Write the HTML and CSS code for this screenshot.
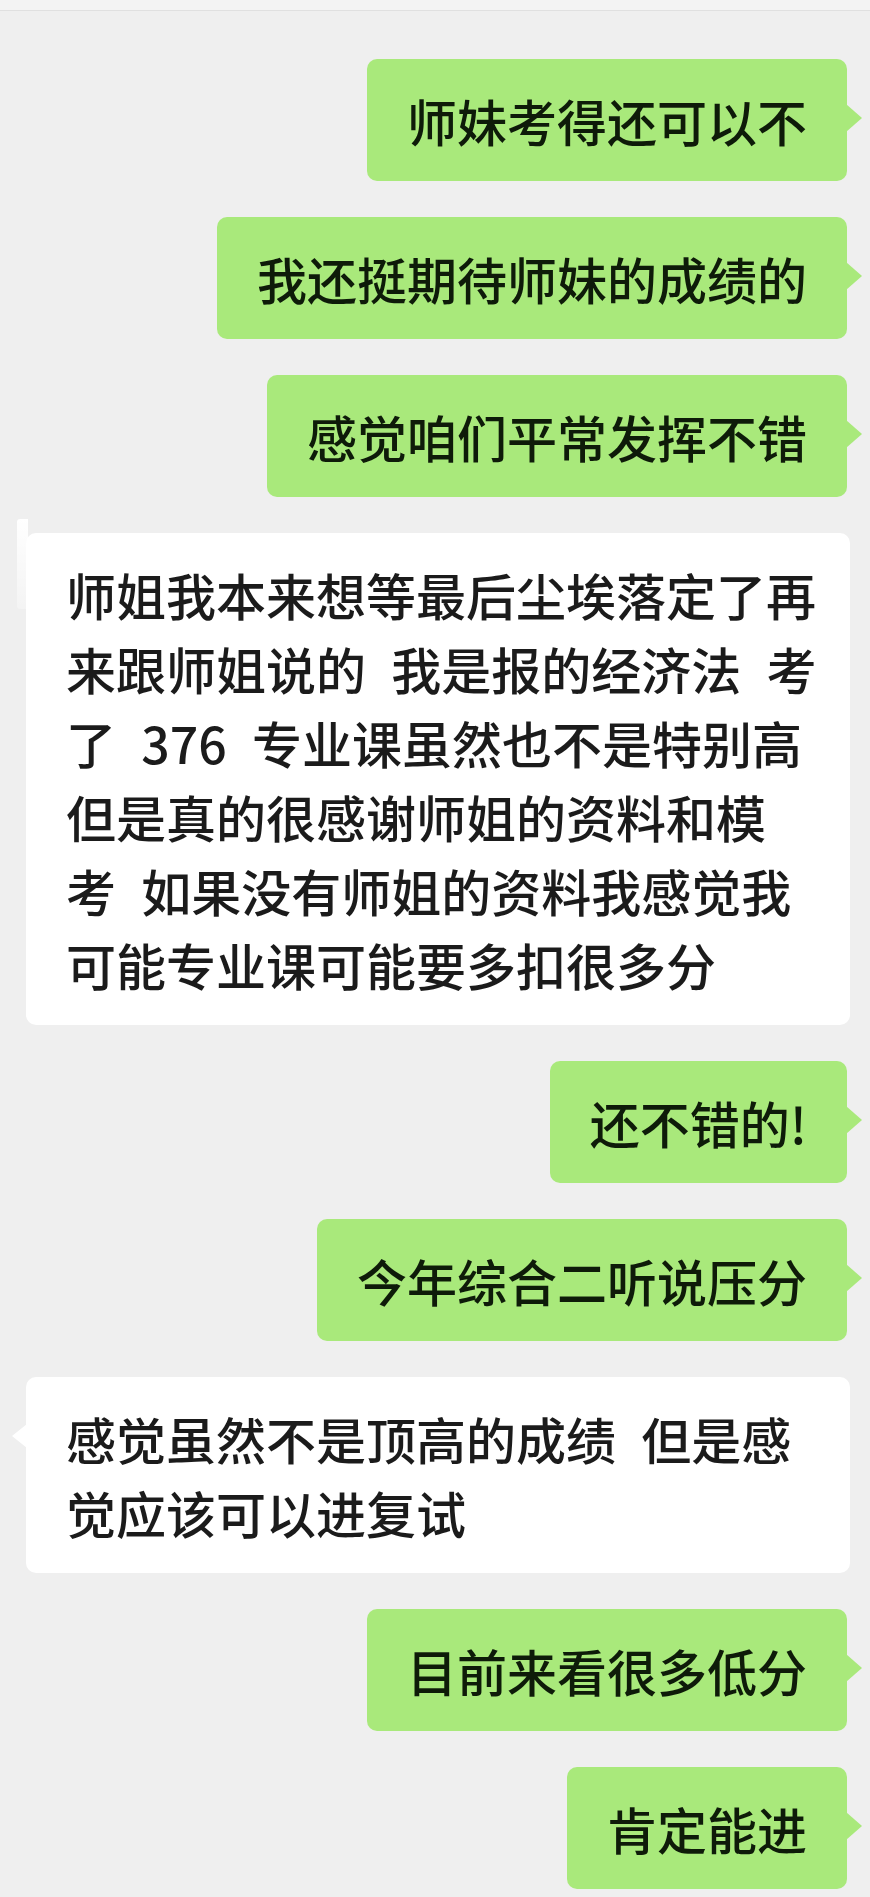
FILE: index.html
```html
<!DOCTYPE html>
<html lang="zh-CN">

<head>
    <meta charset="UTF-8">
    <meta name="viewport" content="width=device-width, initial-scale=1.0">
    <title>聊天记录</title>
    <link rel="stylesheet" href="styles.css">
</head>

<body>
    <div class="chat">
        <div class="top-strip"></div>
        <div class="messages">
            <div class="msg msg-self">
                <div class="bubble">师妹考得还可以不</div>
            </div>
            <div class="msg msg-self">
                <div class="bubble">我还挺期待师妹的成绩的</div>
            </div>
            <div class="msg msg-self">
                <div class="bubble">感觉咱们平常发挥不错</div>
            </div>
            <div class="msg msg-other">
                <div class="bubble bubble-smear">师姐我本来想等最后尘埃落定了再<br>来跟师姐说的 我是报的经济法 考<br>了 376 专业课虽然也不是特别高<br>但是真的很感谢师姐的资料和模<br>考 如果没有师姐的资料我感觉我<br>可能专业课可能要多扣很多分</div>
            </div>
            <div class="msg msg-self">
                <div class="bubble">还不错的!</div>
            </div>
            <div class="msg msg-self">
                <div class="bubble">今年综合二听说压分</div>
            </div>
            <div class="msg msg-other">
                <div class="bubble">感觉虽然不是顶高的成绩 但是感<br>觉应该可以进复试</div>
            </div>
            <div class="msg msg-self">
                <div class="bubble">目前来看很多低分</div>
            </div>
            <div class="msg msg-self">
                <div class="bubble">肯定能进</div>
            </div>
        </div>
    </div>
</body>

</html>
```

FILE: styles.css
```css
* {
    margin: 0;
    padding: 0;
    box-sizing: border-box;
}

html,
body {
    background-color: #efefef;
}

body {
    font-family: "Noto Sans CJK SC", "Noto Sans", sans-serif;
    color: #1b1b1b;
}

.chat {
    width: 870px;
    min-height: 1897px;
    overflow: hidden;
}

/* bit of the previous screen left at the top */
.top-strip {
    height: 11px;
    background: #f3f3f3;
    border-bottom: 1px solid #e0e0e0;
}

.messages {
    display: flex;
    flex-direction: column;
    gap: 36px;
    padding: 48px 23px 0 26px;
}

.msg {
    display: flex;
}

.msg-self {
    justify-content: flex-end;
}

.bubble {
    position: relative;
    flex-shrink: 0;
    white-space: nowrap;
    font-size: 50px;
    font-weight: 500;
    line-height: 74px;
    padding: 24px 40px;
    border-radius: 10px;
    word-spacing: 14px;
}

.msg-self .bubble {
    background: #a9e97b;
    color: #0e1b09;
}

.msg-self .bubble::after {
    content: "";
    position: absolute;
    right: -15px;
    top: 45px;
    border-left: 16px solid #a9e97b;
    border-top: 14px solid transparent;
    border-bottom: 14px solid transparent;
}

.msg-other .bubble {
    width: 824px;
    background: #ffffff;
    color: #1b1b1b;
}

.msg-other .bubble::before {
    content: "";
    position: absolute;
    left: -14px;
    top: 47px;
    border-right: 15px solid #ffffff;
    border-top: 12px solid transparent;
    border-bottom: 12px solid transparent;
}

/* the first reply has a smeared tail in the screenshot */
.msg-other .bubble-smear::before {
    border: none;
    left: -9px;
    top: -14px;
    width: 11px;
    height: 90px;
    border-radius: 3px 0 0 3px;
    background: linear-gradient(#ffffff, rgba(255, 255, 255, 0.3));
}
```
